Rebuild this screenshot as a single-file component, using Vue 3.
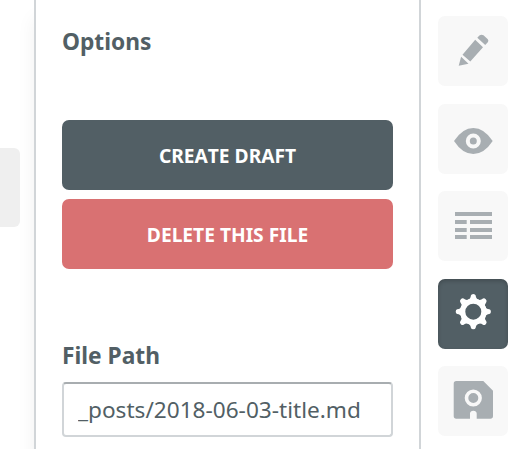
<script setup>
import { ref } from 'vue'

const filePath = ref('_posts/2018-06-03-title.md')
const gearTeeth = [0, 45, 90, 135, 180, 225, 270, 315]
</script>

<template>
  <div class="app">
    <div class="content"><div class="block"></div></div>
    <aside class="panel">
      <h2 class="title">Options</h2>
      <button class="action draft">Create Draft</button>
      <button class="action delete">Delete this file</button>
      <label class="label" for="path">File Path</label>
      <input id="path" v-model="filePath" class="field" type="text" />
    </aside>
    <nav class="rail">
      <button class="tool">
        <svg viewBox="0 0 70 70">
          <path d="M20.7 49.8 L23.1 40.8 L30.5 47.7Z M24.5 38.7 L37.2 23.8 L45 31.2 L32.3 45.4Z M39.3 21.7 L41.4 19.4 Q43.4 18 45.5 19.3 L49.8 23.3 Q51 24.7 49.8 26.2 L47.2 29.1Z" />
        </svg>
      </button>
      <button class="tool">
        <svg viewBox="0 0 70 70">
          <path d="M16 37 Q24.5 24 35.3 24 Q46.1 24 54.7 37 Q46.1 50 35.3 50 Q24.5 50 16 37Z" />
          <circle class="ring" cx="35.3" cy="37" r="5.5" />
        </svg>
      </button>
      <button class="tool">
        <svg viewBox="0 0 70 70">
          <path d="M17 21H54V25H17Z M17 29H28.7V33H17Z M32 29H54V33H32Z M17 37H28.7V41H17Z M32 37H54V41H32Z M17 44H28.7V48H17Z M32 44H54V48H32Z" />
        </svg>
      </button>
      <button class="tool active">
        <svg viewBox="0 0 70 70">
          <circle class="gear" cx="35.3" cy="32.7" r="10.6" />
          <path
            v-for="angle in gearTeeth"
            :key="angle"
            :transform="`rotate(${angle} 35.3 32.7)`"
            d="M29.8 21 Q32.7 19.9 32.9 16.6 Q33.3 15.1 35.3 15.1 Q37.3 15.1 37.7 16.6 Q37.9 19.9 40.8 21 L38.5 24 H32.1Z"
          />
        </svg>
      </button>
      <button class="tool">
        <svg viewBox="0 0 70 70">
          <path d="M18.3 15 H45.3 L55 24.7 V50 Q55 52.7 52.3 52.7 H38.7 V47.5 Q38.4 44.7 35.35 44.7 Q32.3 44.7 32 47.5 V52.7 H18.3 Q15.7 52.7 15.7 50 V17.7 Q15.7 15 18.3 15Z" />
          <circle class="ring disk" cx="35.3" cy="32" r="6.8" />
        </svg>
      </button>
    </nav>
  </div>
</template>

<style>
body {
  background: #fff;
  overflow: hidden;
}
</style>

<style scoped>
.app {
  display: flex;
  width: 521px;
  height: 449px;
  overflow: hidden;
  background: #fff;
  color: #525f65;
  font-family: "Noto Sans", sans-serif;
  font-kerning: none;
}
.app * {
  box-sizing: border-box;
}
.content {
  width: 34px;
  padding-top: 148px;
}
.block {
  width: 20px;
  height: 79px;
  border-radius: 0 6px 6px 0;
  background: #efefef;
}
.panel {
  display: flex;
  flex-direction: column;
  width: 387px;
  padding: 26px 26px 0;
  border: solid #d1d5d8;
  border-width: 0 2px;
  background: #fff;
  box-shadow: 0 18px 18px rgba(0, 0, 0, 0.06);
}
.title,
.label {
  display: block;
  margin: 0;
  font-size: 22.75px;
  font-weight: 700;
  line-height: 32px;
}
.title {
  margin-bottom: 62px;
}
.action {
  height: 70px;
  padding: 2px 0 0;
  border: 0;
  border-radius: 7px;
  color: #fff;
  font: 700 19.2px/68px "Noto Sans", sans-serif;
  font-kerning: none;
  text-transform: uppercase;
}
.draft {
  margin-bottom: 9px;
  background: #525f65;
}
.delete {
  margin-bottom: 71px;
  background: #d97172;
}
.label {
  margin-bottom: 10px;
}
.field {
  width: 100%;
  height: 55px;
  padding: 0 14px 1px;
  border: 2px solid #d1d5d8;
  border-top-color: #a8adb0;
  border-radius: 4px;
  outline: 0;
  background: #fff;
  color: #525f65;
  font: 400 22.6px "Noto Sans", sans-serif;
  font-kerning: none;
}
.rail {
  position: relative;
  display: flex;
  flex: 1;
  flex-direction: column;
  gap: 17.5px;
  padding: 16px 0 0 17px;
  background: #fff;
}
.tool {
  flex: none;
  width: 70px;
  height: 70px;
  padding: 0;
  border: 0;
  border-radius: 7px;
  background: #f8f8f8;
}
.tool svg {
  display: block;
  width: 70px;
  height: 70px;
  fill: #a8aeb2;
}
.ring {
  fill: none;
  stroke: #f8f8f8;
  stroke-width: 4px;
}
.disk {
  stroke-width: 3.6px;
}
.active {
  background: #525f65;
  box-shadow: inset 0 2px 4px rgba(0, 0, 0, 0.2);
}
.active svg {
  fill: #fff;
}
.gear {
  fill: none;
  stroke: #fff;
  stroke-width: 5.2px;
}
</style>
